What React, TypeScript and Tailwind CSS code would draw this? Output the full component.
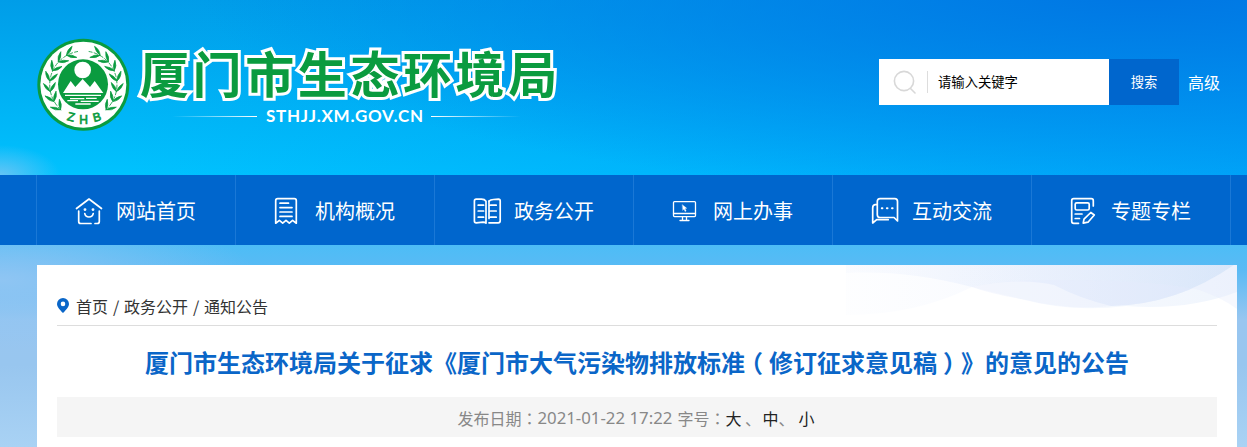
import type { ReactNode } from "react";

const deg = Math.PI / 180;

function Wreath() {
  const leaves: { x: number; y: number; rot: number }[] = [];
  for (let i = 0; i < 7; i++) {
    const a = 139 + i * 18;
    const x = 160 + 101 * Math.cos(a * deg);
    const y = 164 + 101 * Math.sin(a * deg);
    leaves.push({ x, y, rot: a + 90 });
  }
  return (
    <g fill="#0a9b3f" stroke="#0a9b3f" strokeWidth="2" strokeLinejoin="round">
      <path d="M93.7 240.2A101 101 0 0 1 144 64.4" fill="none" strokeWidth="2.5" strokeDasharray="14 4" />
      {leaves.map((l, i) => (
        <g key={i} transform={`translate(${l.x} ${l.y}) rotate(${l.rot})`}>
          <path d="M-12 0Q4 -3 14 -18Q-4 -15 -12 0Z" />
          <path d="M-12 0Q4 3 14 18Q-4 15 -12 0Z" />
        </g>
      ))}
    </g>
  );
}

function Emblem() {
  return (
    <svg className="h-[93px] w-[93px] shrink-0" viewBox="21 24 279 279">
      <circle cx="160" cy="164" r="138" fill="#0a9b3f" />
      <circle cx="160" cy="164" r="129" fill="#fff" />
      <Wreath />
      <g transform="translate(320 0) scale(-1 1)">
        <Wreath />
      </g>
      <circle cx="159" cy="163" r="75" fill="#0a9b3f" />
      <circle cx="158" cy="120" r="25" fill="#fff" />
      <path d="M99 189L122 153L136 171L158 147L180 171L194 153L220 189Z" fill="#fff" />
      <path d="M105 196H213M120 206H163M168 205H200M112 212H144M152 214H206M136 222H182" stroke="#fff" strokeWidth="4" />
      <g fill="#0a9b3f" stroke="#0a9b3f" strokeWidth="2" fontSize="36" textAnchor="middle" fontFamily="Liberation Sans, sans-serif">
        <text transform="translate(120 273) rotate(14)">Z</text>
        <text transform="translate(161 281)">H</text>
        <text transform="translate(204 273) rotate(-14)">B</text>
      </g>
    </svg>
  );
}

function Icon({ children }: { children: ReactNode }) {
  return (
    <svg
      className="h-[30px] w-[30px] shrink-0"
      viewBox="0 0 30 30"
      fill="none"
      stroke="#fff"
      strokeWidth="1.7"
      strokeLinecap="round"
      strokeLinejoin="round"
    >
      {children}
    </svg>
  );
}

const nav: { label: string; icon: ReactNode }[] = [
  {
    label: "网站首页",
    icon: (
      <>
        <path d="M2.5 12.5L15 3L27.5 12.5" />
        <path d="M4.7 15V25.5Q4.7 27.5 6.7 27.5H17M21 27.5H23.3Q25.3 27.5 25.3 25.5V15" />
        <path d="M10.8 17.6Q11.5 21 15 21Q18.5 21 19.2 17.6" />
        <circle cx="11" cy="13.6" r=".6" fill="#fff" />
        <circle cx="19" cy="13.6" r=".6" fill="#fff" />
      </>
    ),
  },
  {
    label: "机构概况",
    icon: (
      <>
        <path d="M2.7 27.2V4.7Q2.7 2.7 4.7 2.7H21.3Q23.3 2.7 23.3 4.7V27.2L19.6 24.4L16.3 27.2L13 24.4L9.7 27.2L6.4 24.4Z" />
        <path d="M7 7.2H15.5M7 11.6H19M7 16H19M7 20.4H19" />
      </>
    ),
  },
  {
    label: "政务公开",
    icon: (
      <>
        <path d="M14 5.2Q12.5 3.2 9.5 3.2H4.2Q2.4 3.2 2.4 5V25Q2.4 26.8 4.2 26.8L11 26.2Q13 26.2 14 27.2Z" />
        <path d="M17 5.2Q18.5 3.7 21.5 3.5L26.5 3.1Q28.2 3.1 28.2 5V24.8Q28.2 26.8 26.2 26.8H17" />
        <path d="M17 5.2V22.5M6.2 9.2H11.6M6.2 15H11.6M6.2 21.2H11.6M18.6 9.2H24.2M18.6 15H24.2M18.6 21.2H24.2" />
      </>
    ),
  },
  {
    label: "网上办事",
    icon: (
      <g strokeWidth="1.3">
        <rect x="2.5" y="5.6" width="22" height="15" rx="1" />
        <path d="M2.5 17.5H24.5M11.5 20.8V23.8M15.5 20.8V23.8M9 24.5H18" />
        <path d="M11.4 8.7L15.8 12.3L14 12.6L15.2 15L14 15.5L13 13.1L11.8 14.2Z" fill="#fff" strokeWidth=".3" />
      </g>
    ),
  },
  {
    label: "互动交流",
    icon: (
      <>
        <path d="M10 2.7H24.8Q27.5 2.7 27.5 5.5V25L24 21.5H10Q7.3 21.5 7.3 18.8V5.5Q7.3 2.7 10 2.7Z" />
        <path d="M7 8.7H5Q2.7 9 2.7 12V27L6.7 23.7H18.2" />
        <path d="M11.8 12.2H12.4M16.9 12.2H17.5M22 12.2H22.6" strokeWidth="2" />
      </>
    ),
  },
  {
    label: "专题专栏",
    icon: (
      <>
        <path d="M24.3 10V4.7Q24.3 2.7 22.3 2.7H4.7Q2.7 2.7 2.7 4.7V25.3Q2.7 27.3 4.7 27.3H9.5" />
        <rect x="6.2" y="6.8" width="14" height="7.2" rx="1.5" />
        <path d="M6.2 18H13M6.2 22.5H10.5" />
        <path d="M21.8 16.5L25.3 19L19 26.2L14.2 27.2L15 23.2Z" />
      </>
    ),
  },
];

function Header() {
  return (
    <header className="flex h-[175px] items-start justify-between pl-[37px]">
      <div className="flex pt-[38px]">
        <Emblem />
        <div className="flex w-[440px] flex-col pl-[10px]">
          <h1 className="mt-[6px] h-[60px] text-[49px] leading-[56px] font-bold tracking-[3.6px] whitespace-nowrap text-[#0a9b3f] [-webkit-text-stroke:6px_white] [paint-order:stroke_fill]">
            厦门市生态环境局
          </h1>
          <div className="flex h-[24px] items-center">
            <span className="ml-[32px] h-px w-[85px] bg-linear-to-r from-white/0 to-white" />
            <span className="ml-[9px] w-[159px] [font-family:Lato,sans-serif] text-[17px] leading-5 font-bold tracking-[0.75px] whitespace-nowrap text-white">
              STHJJ.XM.GOV.CN
            </span>
            <span className="ml-[6px] h-px w-[90px] bg-linear-to-r from-white to-white/0" />
          </div>
        </div>
      </div>
      <div className="mt-[59px] mr-[27px] flex h-[46px] items-center">
        <div className="flex h-full w-[230px] items-center bg-white pl-[14px]">
          <svg className="h-6 w-6" viewBox="0 0 24 24" fill="none" stroke="#d8d8d8" strokeWidth="1.6">
            <circle cx="11" cy="11" r="9.6" />
            <path d="M17.5 18.5L22 23" strokeLinecap="round" />
          </svg>
          <span className="ml-[10px] h-[22px] w-px bg-[#ddd]" />
          <span className="ml-[10px] text-[13.33px] text-black">请输入关键字</span>
        </div>
        <button className="flex h-full w-[70px] items-center justify-center bg-[#0066cd] text-[13.33px] text-white">搜索</button>
        <a className="ml-[9px] text-base whitespace-nowrap text-white">高级</a>
      </div>
    </header>
  );
}

function Waves() {
  return (
    <svg className="absolute top-0 right-0 h-[55px] w-[391px]" viewBox="0 0 391 55">
      <defs>
        <linearGradient id="w1" x1="0" x2="1">
          <stop offset="0" stopColor="#e6edfd" stopOpacity=".15" />
          <stop offset=".5" stopColor="#dce7fb" stopOpacity=".5" />
          <stop offset="1" stopColor="#cfe0f8" stopOpacity=".7" />
        </linearGradient>
      </defs>
      <path d="M0 0H388Q330 40 265 41Q235 34 208 20Q175 12 126 22C80 10 40 6 0 8Z" fill="url(#w1)" />
      <path d="M0 0H391V27Q340 46 280 41Q225 48 175 34Q145 27 126 22Q70 50 0 50Z" fill="url(#w1)" opacity=".45" />
      <path d="M126 22Q160 14 220 15Q300 15 350 24Q375 32 391 44V0H388Q330 40 265 41Q225 46 175 34Q145 29 126 22Z" fill="#e6ecfc" opacity=".35" />
    </svg>
  );
}

export default function App() {
  return (
    <div className="h-[447px] w-[1247px] overflow-hidden bg-[radial-gradient(ellipse_60px_30px_at_0px_175px,#65c4f5_0%,#65c4f500_100%),radial-gradient(ellipse_950px_210px_at_1150px_-10px,#0076e3_0%,#0076e300_100%),linear-gradient(90deg,#009cf800_10%,#009cf8b0_100%),linear-gradient(180deg,#009de8_0px,#00c2fe_175px)] [background-size:1247px_175px] bg-no-repeat [font-family:'Noto_Sans_CJK_SC',sans-serif]">
      <Header />
      <nav className="flex h-[70px] bg-[#0066cd] pl-[36px]">
        {nav.map((n) => (
          <a key={n.label} className="flex w-[199px] shrink-0 items-center border-l border-[#1a78d6] pt-px pl-[37px] text-xl text-white">
            <Icon>{n.icon}</Icon>
            <span className="ml-[12px]">{n.label}</span>
          </a>
        ))}
        <span className="w-px bg-[#1a78d6]" />
      </nav>
      <div className="h-[202px] bg-[radial-gradient(ellipse_260px_70px_at_0px_35px,#8fc5f3_0%,#8fc5f300_100%),linear-gradient(180deg,#4dbdf6_0px,#5abaf4_25px,#98c6f0_75px,#98c6ef_120px,#a9d2f4_202px)] pt-5 pl-[37px]">
        <main className="relative h-[182px] w-[1200px] bg-white px-5">
          <Waves />
          <div className="relative flex h-[61px] items-center border-b border-[#ddd] pt-[21px]">
            <svg className="-mt-px h-[15px] w-3" viewBox="0 0 12 15">
              <path d="M6 0A6 6 0 0 0 0 6C0 9 4 13 6 15C8 13 12 9 12 6A6 6 0 0 0 6 0ZM6 3.6A2.3 2.3 0 1 1 6 8.2A2.3 2.3 0 0 1 6 3.6Z" fill="#0a66c8" />
            </svg>
            <span className="ml-[7px] flex text-base text-[#333]">
              <span>首页</span>
              <span className="w-4 text-center">/</span>
              <span>政务公开</span>
              <span className="w-4 text-center">/</span>
              <span>通知公告</span>
            </span>
          </div>
          <h2 className="flex h-[71px] justify-center text-2xl leading-[72px] font-bold whitespace-nowrap text-[#0a66c8] [text-spacing-trim:space-all]">
            <span>厦门市生态环境局关于征求《厦门市大气污染物排放标准</span>
            <span className="mx-[6px] w-3 [font-feature-settings:'halt']">（</span>
            <span>修订征求意见稿</span>
            <span className="mx-[6px] w-3 [font-feature-settings:'halt']">）</span>
            <span>》的意见的公告</span>
          </h2>
          <div className="flex h-10 items-center justify-center bg-[#f5f5f5] pt-px pr-[2px] text-base whitespace-pre text-[#888] [text-spacing-trim:space-all]">
            <span className="w-16">发布日期</span>
            <span className="w-4 [font-family:'Noto_Sans_CJK_TC',sans-serif]">：</span>
            <span className="w-[140px] [font-family:'Noto_Sans',sans-serif] text-[16.8px]">2021-01-22 17:22</span>
            <span>字号</span>
            <span className="w-4 [font-family:'Noto_Sans_CJK_TC',sans-serif]">：</span>
            <span className="text-[#222]">大</span>
            <span className="w-[21px]"> 、</span>
            <span className="text-[#222]">中</span>
            <span className="w-[20px]">、</span>
            <span className="text-[#222]">小</span>
          </div>
        </main>
      </div>
    </div>
  );
}
